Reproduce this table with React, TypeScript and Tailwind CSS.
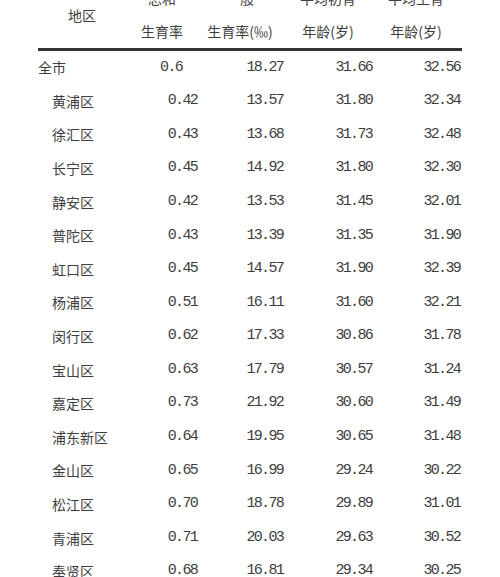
const rows: [string, string, string, string, string][] = [
    ["全市", "0.6", "18.27", "31.66", "32.56"],
    ["黄浦区", "0.42", "13.57", "31.80", "32.34"],
    ["徐汇区", "0.43", "13.68", "31.73", "32.48"],
    ["长宁区", "0.45", "14.92", "31.80", "32.30"],
    ["静安区", "0.42", "13.53", "31.45", "32.01"],
    ["普陀区", "0.43", "13.39", "31.35", "31.90"],
    ["虹口区", "0.45", "14.57", "31.90", "32.39"],
    ["杨浦区", "0.51", "16.11", "31.60", "32.21"],
    ["闵行区", "0.62", "17.33", "30.86", "31.78"],
    ["宝山区", "0.63", "17.79", "30.57", "31.24"],
    ["嘉定区", "0.73", "21.92", "30.60", "31.49"],
    ["浦东新区", "0.64", "19.95", "30.65", "31.48"],
    ["金山区", "0.65", "16.99", "29.24", "30.22"],
    ["松江区", "0.70", "18.78", "29.89", "31.01"],
    ["青浦区", "0.71", "20.03", "29.63", "30.52"],
    ["奉贤区", "0.68", "16.81", "29.34", "30.25"],
];

const cjk = "font-['Noto_Sans_CJK_SC','Noto_Sans',sans-serif]";
const mono = "font-['Liberation_Mono','DejaVu_Sans_Mono',monospace] text-[15px] tracking-[-1.7px]";

export default function App() {
    return (
        <div className={`h-[577px] w-[500px] overflow-hidden bg-white text-[#3e3e3e] ${cjk}`}>
            <div className="-mt-[18px] ml-[38px] w-[424px]">
                <div className="grid grid-cols-[88px_72px_84px_92px_84px] text-center text-[14px] leading-[33px]">
                    <div className="flex items-center justify-center">地区</div>
                    <div>
                        <div>总和</div>
                        <div>生育率</div>
                    </div>
                    <div>
                        <div>一般</div>
                        <div>生育率(‰)</div>
                    </div>
                    <div>
                        <div>平均初育</div>
                        <div>年龄(岁)</div>
                    </div>
                    <div>
                        <div>平均生育</div>
                        <div>年龄(岁)</div>
                    </div>
                </div>

                <div className="h-[3px] bg-[#343434]" />

                <div>
                    {rows.map(([name, tfr, gfr, first, avg], index) => (
                        <div
                            key={name}
                            className="grid h-[33.6px] grid-cols-[100px_59px_86px_89px_88px] items-center"
                        >
                            <div className={`text-[14px] ${index === 0 ? "" : "pl-[14px]"}`}>{name}</div>
                            <div className={`text-right ${mono} ${index === 0 ? "pr-[15px]" : ""}`}>{tfr}</div>
                            <div className={`text-right ${mono}`}>{gfr}</div>
                            <div className={`text-right ${mono}`}>{first}</div>
                            <div className={`text-right ${mono}`}>{avg}</div>
                        </div>
                    ))}
                </div>
            </div>
        </div>
    );
}
